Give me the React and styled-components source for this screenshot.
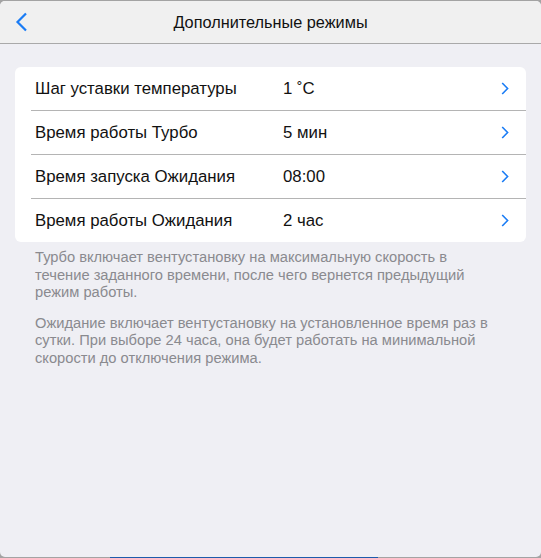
import React from "react";
import styled, { createGlobalStyle } from "styled-components";

const GlobalStyle = createGlobalStyle`
  html, body {
    margin: 0;
    padding: 0;
    background: #a3a3a3;
  }
  body {
    font-family: "Liberation Sans", Arial, sans-serif;
    -webkit-font-smoothing: antialiased;
  }
`;

const Backdrop = styled.div`
  width: 541px;
  height: 558px;
  display: flex;
  flex-direction: column;
  padding-top: 1px;
  box-sizing: border-box;
  background: #a3a3a3;
  overflow: hidden;
`;

const Sheet = styled.div`
  flex: 1;
  display: flex;
  flex-direction: column;
  background: #efeff4;
  border-radius: 5px;
  overflow: hidden;
`;

const TabStrip = styled.div`
  height: 1px;
  display: flex;
  padding-left: 110px;
`;

const TabMark = styled.div`
  width: 268px;
  background: #1d5bab;
`;

const NavBar = styled.header`
  height: 42px;
  flex: none;
  display: grid;
  grid-template-columns: 60px 1fr 60px;
  align-items: center;
  background: #f0f0f0;
  border-bottom: 1px solid #a9a9a9;
`;

const BackButton = styled.button`
  border: 0;
  background: none;
  padding: 0 0 0 15px;
  height: 100%;
  display: flex;
  align-items: center;
  cursor: pointer;
`;

const Title = styled.h1`
  margin: 0;
  text-align: center;
  font-size: 16.3px;
  font-weight: 400;
  color: #111;
`;

const Content = styled.main`
  padding: 23px 15px 0;
`;

const Card = styled.section`
  background: #fff;
  border-radius: 6px;
  display: flex;
  flex-direction: column;
`;

const Row = styled.div`
  height: ${(p) => (p.$first ? "43px" : "44px")};
  display: grid;
  grid-template-columns: 248px 1fr 8px;
  align-items: center;
  margin-left: 16px;
  padding: 0 17px 0 4px;
  border-top: ${(p) => (p.$first ? "0" : "1px solid #b4b4b4")};
  box-sizing: border-box;
  font-size: 16.8px;
  color: #111;
  cursor: pointer;
`;

const Label = styled.span``;
const Value = styled.span``;

const Footer = styled.div`
  width: 460px;
  padding: 7px 0 0 20px;
  display: flex;
  flex-direction: column;
  gap: 13px;
`;

const Note = styled.p`
  margin: 0;
  font-size: 14.7px;
  line-height: 17.5px;
  color: #8a8a8f;
`;

const ChevronLeft = () => (
  <svg width="13" height="20" viewBox="0 0 13 20">
    <path d="M11 1.5 L2.5 10 L11 18.5" fill="none" stroke="#1a7cf5" strokeWidth="2.2" />
  </svg>
);

const ChevronRight = () => (
  <svg width="8" height="13" viewBox="0 0 8 13">
    <path d="M1.2 1 L6.6 6.5 L1.2 12" fill="none" stroke="#1a7cf5" strokeWidth="1.6" />
  </svg>
);

const settings = [
  { label: "Шаг уставки температуры", value: "1 ˚C" },
  { label: "Время работы Турбо", value: "5 мин" },
  { label: "Время запуска Ожидания", value: "08:00" },
  { label: "Время работы Ожидания", value: "2 час" },
];

export default function App() {
  return (
    <>
      <GlobalStyle />
      <Backdrop>
        <Sheet>
          <NavBar>
            <BackButton aria-label="Назад">
              <ChevronLeft />
            </BackButton>
            <Title>Дополнительные режимы</Title>
            <span />
          </NavBar>
          <Content>
            <Card>
              {settings.map((s, i) => (
                <Row key={s.label} $first={i === 0}>
                  <Label>{s.label}</Label>
                  <Value>{s.value}</Value>
                  <ChevronRight />
                </Row>
              ))}
            </Card>
            <Footer>
              <Note>
                Турбо включает вентустановку на максимальную скорость в течение
                заданного времени, после чего вернется предыдущий режим работы.
              </Note>
              <Note>
                Ожидание включает вентустановку на установленное время раз в
                сутки. При выборе 24 часа, она будет работать на минимальной
                скорости до отключения режима.
              </Note>
            </Footer>
          </Content>
        </Sheet>
        <TabStrip>
          <TabMark />
        </TabStrip>
      </Backdrop>
    </>
  );
}
